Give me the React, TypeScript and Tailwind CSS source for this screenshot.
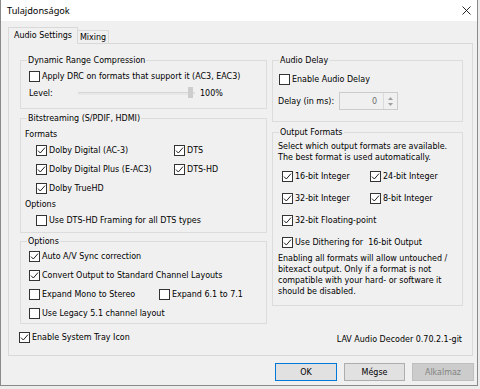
import React from "react";

function Box({ checked }: { checked?: boolean }) {
  return (
    <span className="w-[11px] h-[11px] shrink-0 border border-[#333333] bg-white flex items-center justify-center">
      {checked ? (
        <svg width="9" height="9" viewBox="0 0 9 9" fill="none">
          <path d="M1 4.6 L3.3 7 L8 1.6" stroke="#222222" strokeWidth="1" />
        </svg>
      ) : null}
    </span>
  );
}

function Check({ checked, label, h = "h-[19px]" }: { checked?: boolean; label: string; h?: string }) {
  return (
    <div className={`flex items-center gap-[2px] whitespace-nowrap ${h}`}>
      <Box checked={checked} />
      <span className="whitespace-pre">{label}</span>
    </div>
  );
}

function Legend({ children }: { children: React.ReactNode }) {
  return (
    <span className="absolute left-[6px] top-[-6px] px-[1px] bg-[#f0f0f0] leading-[11px] whitespace-nowrap">
      {children}
    </span>
  );
}

export default function App() {
  return (
    <div className="w-[480px] h-[389px] bg-[#ececec] overflow-hidden font-['DejaVu_Sans_Condensed','DejaVu_Sans',sans-serif] text-[8.9px] text-black leading-[11px]">
      <div className="w-[478px] h-[386px] bg-[#f0f0f0] border-l border-r border-b border-[#8a8a8a] flex flex-col">
        {/* title bar */}
        <div className="h-[21px] bg-white flex items-center justify-between pl-[6px] pr-[6px] shrink-0">
          <span className="font-['Noto_Sans',sans-serif] text-[9.2px] leading-[12px]">Tulajdonságok</span>
          <svg width="9" height="9" viewBox="0 0 9 9">
            <path d="M0.5 0.5 L8.5 8.5 M8.5 0.5 L0.5 8.5" stroke="#111111" strokeWidth="0.9" />
          </svg>
        </div>

        {/* tabs */}
        <div className="pt-[6px] pl-[7px] shrink-0">
          <div className="h-[16px] flex items-end">
            <div className="relative z-10 -mb-px h-[17px] w-[70px] bg-[#f0f0f0] border-t border-l border-r border-[#d9d9d9] flex items-center justify-center pb-[1px]">
              Audio Settings
            </div>
            <div className="h-[13px] w-[31px] bg-[#f0f0f0] border-t border-r border-[#d9d9d9] flex items-center justify-center">
              Mixing
            </div>
          </div>
          {/* pane */}
          <div className="w-[465px] h-[313px] bg-[#f0f0f0] border border-[#d9d9d9] flex pl-[11px] pt-[16px]">
            {/* left column */}
            <div className="w-[247px] flex flex-col">
              {/* DRC */}
              <div className="relative border border-[#dcdcdc] pt-[7px] pb-[6px] pl-[8px]">
                <Legend>Dynamic Range Compression</Legend>
                <Check label="Apply DRC on formats that support it (AC3, EAC3)" h="h-[17px]" />
                <div className="h-[17px] flex items-center">
                  <span className="w-[49px]">Level:</span>
                  <div className="relative w-[117px] h-[3px] bg-[#e7e7e7] border-t border-[#d6d6d6]">
                    <span className="absolute right-[2px] top-[-6px] w-[5px] h-[11px] bg-[#cdcdcd]" />
                  </div>
                  <span className="ml-[5px]">100%</span>
                </div>
              </div>

              {/* Bitstreaming */}
              <div className="relative mt-[9px] border border-[#dcdcdc] pt-[8px] pb-[2px]">
                <Legend>Bitstreaming (S/PDIF, HDMI)</Legend>
                <div className="h-[14px] flex items-center pl-[4px]">Formats</div>
                <div className="grid grid-cols-[138px_auto] pl-[15px]">
                  <Check checked label="Dolby Digital (AC-3)" />
                  <Check checked label="DTS" />
                  <Check checked label="Dolby Digital Plus (E-AC3)" />
                  <Check checked label="DTS-HD" />
                  <Check checked label="Dolby TrueHD" />
                </div>
                <div className="h-[13px] flex items-center pl-[4px]">Options</div>
                <div className="pl-[15px]">
                  <Check label="Use DTS-HD Framing for all DTS types" />
                </div>
              </div>

              {/* Options */}
              <div className="relative mt-[8px] border border-[#dcdcdc] pt-[5px] pl-[8px]">
                <Legend>Options</Legend>
                <Check checked label="Auto A/V Sync correction" />
                <Check checked label="Convert Output to Standard Channel Layouts" />
                <div className="grid grid-cols-[130px_auto]">
                  <Check label="Expand Mono to Stereo" />
                  <Check label="Expand 6.1 to 7.1" />
                </div>
                <Check label="Use Legacy 5.1 channel layout" />
              </div>

              <div className="mt-[4px] -ml-px">
                <Check checked label="Enable System Tray Icon" />
              </div>
            </div>

            {/* right column */}
            <div className="w-[191px] ml-[5px] flex flex-col">
              {/* Audio Delay */}
              <div className="relative border border-[#dcdcdc] pt-[9px] pb-[8px]">
                <Legend>Audio Delay</Legend>
                <div className="pl-[6px]">
                  <Check label="Enable Audio Delay" />
                </div>
                <div className="h-[24px] flex items-center pl-[5px]">
                  <span className="w-[61px]">Delay (in ms):</span>
                  <div className="w-[59px] h-[18px] border border-[#cccccc] bg-[#f0f0f0] flex">
                    <span className="flex-1 flex items-center justify-end pr-[6px] text-[#6d6d6d]">0</span>
                    <div className="w-[14px] border-l border-[#dadada] flex flex-col items-center justify-center gap-[3px]">
                      <svg width="5" height="3" viewBox="0 0 5 3"><path d="M0 3 L2.5 0 L5 3 Z" fill="#a0a0a0" /></svg>
                      <svg width="5" height="3" viewBox="0 0 5 3"><path d="M0 0 L2.5 3 L5 0 Z" fill="#a0a0a0" /></svg>
                    </div>
                  </div>
                </div>
              </div>

              {/* Output Formats */}
              <div className="relative mt-[10px] border border-[#dcdcdc] pt-[8px] pb-[8px]">
                <Legend>Output Formats</Legend>
                <div className="pl-[5px] whitespace-nowrap">
                  <div>Select which output formats are available.</div>
                  <div>The best format is used automatically.</div>
                </div>
                <div className="mt-[2px] pl-[9px] grid grid-cols-[88px_auto]">
                  <Check checked label="16-bit Integer" h="h-[22px]" />
                  <Check checked label="24-bit Integer" h="h-[22px]" />
                  <Check checked label="32-bit Integer" h="h-[22px]" />
                  <Check checked label="8-bit Integer" h="h-[22px]" />
                </div>
                <div className="pl-[9px]">
                  <Check checked label="32-bit Floating-point" h="h-[22px]" />
                  <Check checked label="Use Dithering for  16-bit Output" h="h-[22px]" />
                </div>
                <div className="pl-[5px] whitespace-nowrap">
                  <div>Enabling all formats will allow untouched /</div>
                  <div>bitexact output. Only if a format is not</div>
                  <div>compatible with your hard- or software it</div>
                  <div>should be disabled.</div>
                </div>
              </div>

              <div className="mt-[27px] h-[12px] flex items-center justify-end pr-[1px]">
                LAV Audio Decoder 0.70.2.1-git
              </div>
            </div>
          </div>
        </div>

        {/* buttons */}
        <div className="mt-[7px] flex justify-end gap-[7px] pr-[3px]">
          <button className="w-[62px] h-[18px] bg-[#e1e1e1] border border-[#0078d7] flex items-center justify-center">OK</button>
          <button className="w-[61px] h-[18px] bg-[#e1e1e1] border border-[#adadad] flex items-center justify-center">Mégse</button>
          <button className="w-[62px] h-[18px] bg-[#cccccc] border border-[#bfbfbf] text-[#838383] flex items-center justify-center">Alkalmaz</button>
        </div>
      </div>
    </div>
  );
}
